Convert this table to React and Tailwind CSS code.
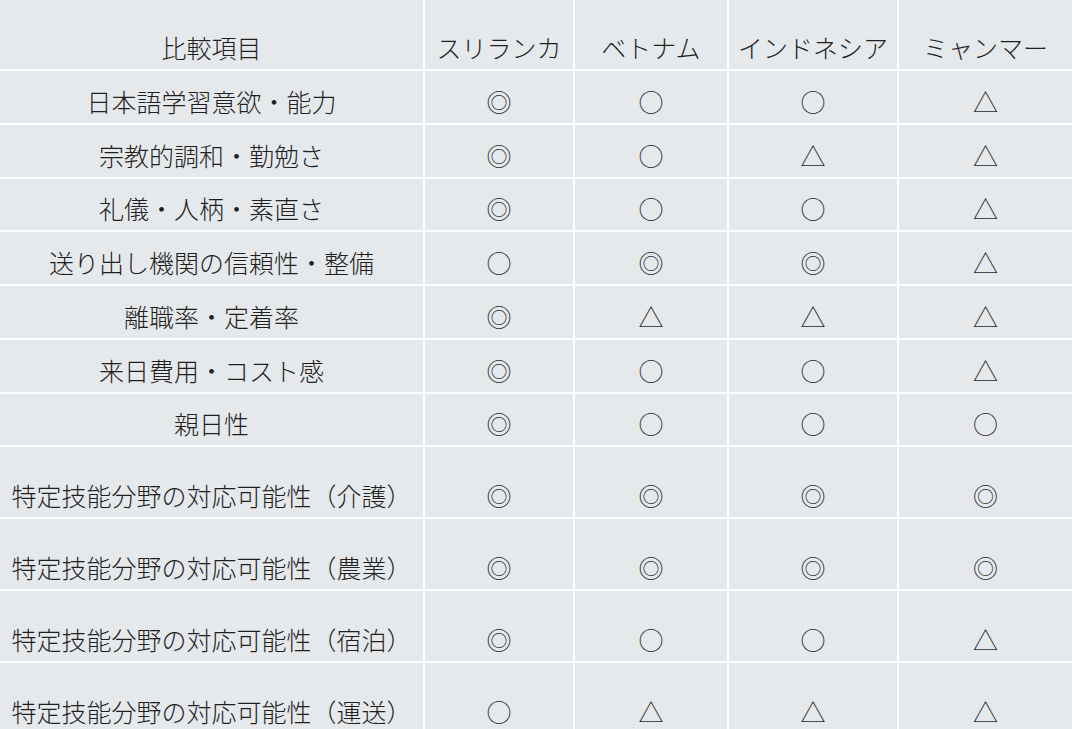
const COLS = ['スリランカ', 'ベトナム', 'インドネシア', 'ミャンマー']

const ROWS = [
  { label: '日本語学習意欲・能力', marks: ['◎', '○', '○', '△'] },
  { label: '宗教的調和・勤勉さ', marks: ['◎', '○', '△', '△'] },
  { label: '礼儀・人柄・素直さ', marks: ['◎', '○', '○', '△'] },
  { label: '送り出し機関の信頼性・整備', marks: ['○', '◎', '◎', '△'] },
  { label: '離職率・定着率', marks: ['◎', '△', '△', '△'] },
  { label: '来日費用・コスト感', marks: ['◎', '○', '○', '△'] },
  { label: '親日性', marks: ['◎', '○', '○', '○'] },
  { label: '特定技能分野の対応可能性（介護）', marks: ['◎', '◎', '◎', '◎'], tall: true },
  { label: '特定技能分野の対応可能性（農業）', marks: ['◎', '◎', '◎', '◎'], tall: true },
  { label: '特定技能分野の対応可能性（宿泊）', marks: ['◎', '○', '○', '△'], tall: true },
  { label: '特定技能分野の対応可能性（運送）', marks: ['○', '△', '△', '△'], tall: true },
]

function Cell({ children, h }) {
  return (
    <div className={`flex items-end justify-center bg-[#e6e9ec] pb-[4px] whitespace-nowrap ${h}`}>
      {children}
    </div>
  )
}

export default function App() {
  return (
    <div className="min-h-screen bg-white text-[#1f1f1f] text-[25px] leading-[36px] font-light" style={{ fontFamily: '"Noto Sans CJK JP", "Noto Sans", sans-serif' }}>
      <div className="grid grid-cols-[423px_148px_152px_168px_1fr] gap-[2px]">
        <Cell h="h-[69px]">比較項目</Cell>
        {COLS.map(c => <Cell key={c} h="h-[69px]">{c}</Cell>)}
        {ROWS.map((r, i) => {
          const h = r.tall ? 'h-[70px]' : (i === 2 || i === 6 ? 'h-[51px]' : 'h-[52px]')
          return [
            <Cell key={`l${i}`} h={h}>{r.label}</Cell>,
            ...r.marks.map((m, j) => <Cell key={`m${i}-${j}`} h={h}>{m}</Cell>),
          ]
        })}
      </div>
    </div>
  )
}
